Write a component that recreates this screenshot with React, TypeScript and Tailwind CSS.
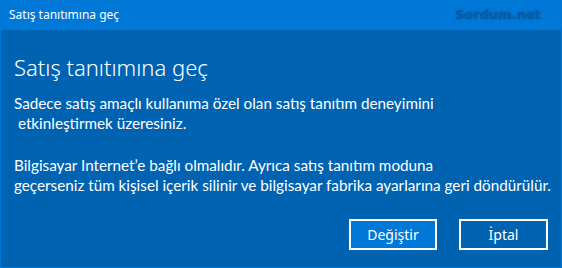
import React from 'react'

export default function App() {
  return (
    <div
      className="flex h-[268px] w-[562px] flex-col bg-[#0078d7] text-white"
      style={{ fontFamily: '"Noto Sans", "Open Sans", sans-serif' }}
    >
      <div className="flex h-[30px] items-center justify-between pl-[9px] pr-[21px]">
        <span className="text-[12px]">Satış tanıtımına geç</span>
        <span
          className="text-[13px] font-bold text-[#0a5ca6] [text-shadow:0_0_2px_rgba(0,60,130,0.6)]"
          style={{ fontFamily: '"DejaVu Sans", Verdana, sans-serif' }}
        >
          Sordum.net
        </span>
      </div>
      <div className="mx-px mb-px flex flex-1 flex-col bg-[#0063b1] px-[13px] pt-[22px] pb-[17px]">
        <h1 className="text-[22px] font-light leading-[30px]">Satış tanıtımına geç</h1>
        <div className="text-[15.25px] leading-[20px]" style={{ fontFamily: 'Lato, "Noto Sans", sans-serif' }}>
          <p className="mt-[11px] whitespace-nowrap">
            Sadece satış amaçlı kullanıma özel olan satış tanıtım deneyimini
            <br />
            &nbsp;etkinleştirmek üzeresiniz.
          </p>
          <p className="mt-[22px] whitespace-nowrap">
            Bilgisayar Internet’e bağlı olmalıdır. Ayrıca satış tanıtım moduna
            <br />
            geçerseniz tüm kişisel içerik silinir ve bilgisayar fabrika ayarlarına geri döndürülür.
          </p>
        </div>
        <div className="mt-auto flex justify-end gap-[22px]">
          <button className="h-[31px] w-[88px] border-2 border-white bg-[#0078d7] text-[14px]">
            Değiştir
          </button>
          <button className="h-[31px] w-[89px] border-2 border-white text-[14px]">İptal</button>
        </div>
      </div>
    </div>
  )
}
